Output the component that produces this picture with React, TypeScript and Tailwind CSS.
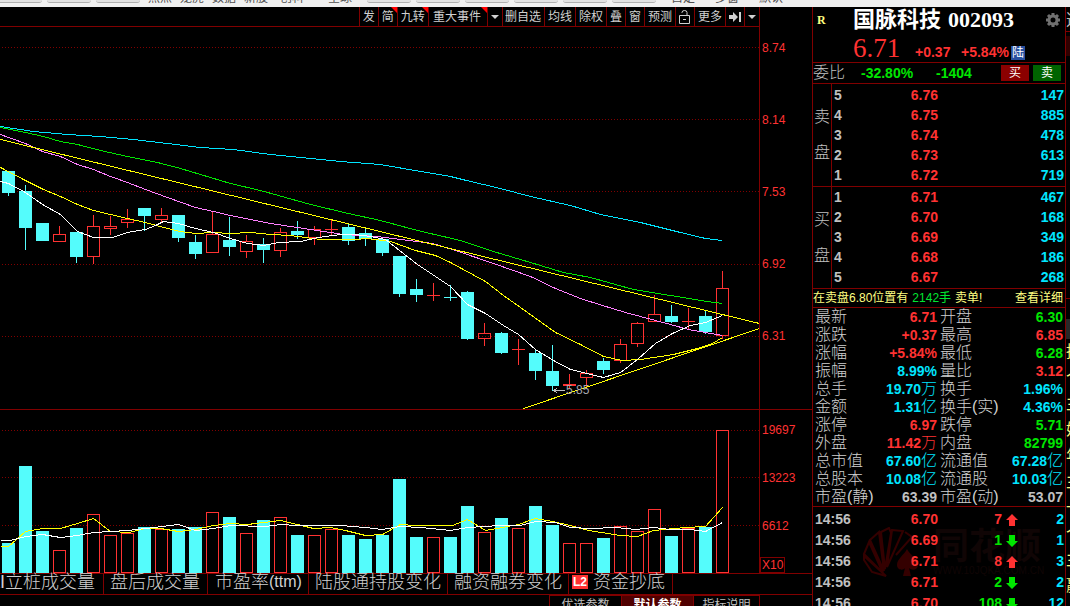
import React from 'react';
import clsx from 'clsx';

const RED = '#ff3232';
const CYAN = '#54fcfc';
const GRID = '#800000';

const STEP = 17;
const BODY = 13;

interface Candle {
  up: boolean;
  top: number;
  bottom: number;
  high: number;
  low: number;
  vol: number;
}

// [up, body top, body bottom, high, low, volume top]
const raw: [number, number, number, number, number, number][] = [
  [0, 171, 193, 171, 196, 543],
  [0, 191, 228, 185, 250, 466],
  [0, 223, 241, 223, 241, 531],
  [1, 234, 242, 226, 242, 550],
  [0, 232, 257, 232, 263, 528],
  [1, 226, 257, 215, 264, 514],
  [1, 226, 229, 216, 235, 535],
  [1, 219, 223, 209, 228, 533],
  [0, 208, 216, 208, 231, 527],
  [1, 215, 220, 208, 223, 529],
  [0, 215, 238, 215, 242, 529],
  [0, 242, 254, 235, 259, 527],
  [1, 234, 253, 212, 253, 512],
  [0, 240, 247, 217, 256, 517],
  [1, 241, 252, 235, 258, 533],
  [0, 244, 250, 238, 263, 520],
  [1, 232, 251, 228, 257, 517],
  [0, 231, 235, 221, 239, 535],
  [1, 229, 238, 226, 245, 535],
  [1, 229, 230, 220, 235, 529],
  [0, 227, 241, 224, 245, 535],
  [0, 233, 239, 229, 246, 539],
  [0, 239, 253, 237, 256, 535],
  [0, 256, 294, 256, 297, 479],
  [0, 289, 295, 279, 302, 537],
  [1, 295, 296, 283, 301, 537],
  [0, 297, 298, 285, 301, 537],
  [0, 292, 339, 291, 340, 506],
  [1, 333, 339, 323, 346, 532],
  [0, 333, 353, 332, 354, 518],
  [1, 349, 350, 339, 365, 528],
  [0, 353, 371, 350, 380, 506],
  [0, 371, 386, 345, 391, 525],
  [1, 384, 386, 374, 388, 543],
  [1, 373, 378, 370, 387, 543],
  [0, 361, 370, 358, 374, 538],
  [1, 344, 361, 339, 363, 526],
  [1, 323, 344, 322, 347, 531],
  [1, 314, 322, 295, 322, 509],
  [0, 316, 322, 305, 323, 536],
  [1, 321, 322, 308, 329, 528],
  [0, 316, 332, 311, 334, 527],
  [1, 288, 336, 271, 339, 430],
];

const candles: Candle[] = raw.map(([up, top, bottom, high, low, vol]) => ({
  up: up === 1,
  top,
  bottom,
  high,
  low,
  vol,
}));

const priceLines = [
  {
    color: '#00e5ff',
    points:
      '0,126 33,131 67,134 100,136 133,139 167,143 200,147 233,149 270,154 340,161 380,164 420,171 450,176 466,180 500,188 530,196 570,205 600,214 640,222 680,232 705,238 722,240',
  },
  {
    color: '#00e600',
    points:
      '0,127 25,132 43,136 60,141 77,144 100,150 127,156 157,162 180,168 200,174 230,183 260,190 310,204 348,213 380,220 417,230 460,240 493,251 530,262 563,272 590,277 633,289 670,295 707,301 722,303',
  },
  {
    color: '#ff80ff',
    points:
      '0,134 8,137 25,143 42,151 60,156 77,164 93,169 110,176 127,182 145,189 167,197 195,207 213,211 230,215 270,223 310,229 343,234 377,236 400,239 432,243 455,250 493,263 530,276 555,288 580,298 602,305 625,312 670,324 688,329 705,332 722,335',
  },
  { color: '#ffff00', points: '0,139 759,323' },
  { color: '#ffff00', points: '523,408 759,328' },
  {
    color: '#ffff00',
    points:
      '0,167 25,180 43,189 60,196 77,204 93,210 127,218 145,222 163,227 180,231 195,233 213,232 230,233 250,232 270,234 290,235 320,239 355,239 367,238 390,241 415,250 435,255 450,262 485,281 503,295 520,307 555,332 580,344 603,356 622,360 640,359 673,354 697,348 712,343 722,337',
  },
  {
    color: '#ffffff',
    points:
      '0,181 8,183 25,192 42,204 60,214 77,231 93,237 112,237 127,232 145,229 155,225 163,221 178,223 195,228 213,232 230,238 247,243 263,245 278,242 300,241 318,237 340,234 355,234 370,236 385,239 417,264 450,286 467,304 485,313 503,325 518,334 535,349 553,360 570,369 603,377 620,372 637,359 655,343 672,333 690,325 705,322 722,315',
  },
];

const volumeLines = [
  {
    color: '#ffff00',
    points:
      '0,546 8,546 25,531 42,528 60,528 77,523 93,518 110,531 128,532 145,528 160,528 178,531 195,529 213,525 230,523 247,524 263,522 280,520 297,524 313,528 330,527 345,530 365,535 382,534 400,524 415,525 452,525 467,519 485,530 502,527 518,524 535,518 552,521 570,525 588,530 620,535 637,536 653,530 685,527 705,526 722,507',
  },
  {
    color: '#ffffff',
    points:
      '0,540 10,540 25,536 42,534 60,537 77,535 93,532 127,530 145,528 178,524 195,530 213,528 230,525 265,526 280,524 297,525 340,525 365,527 382,529 400,526 420,527 450,530 467,527 500,525 520,525 535,521 555,522 570,527 590,528 615,527 635,529 653,527 670,529 690,529 705,531 722,522',
  },
];

const topLinks = [
  { text: '热点', cls: 'ml-2' },
  { text: '龙虎', cls: 'ml-2' },
  { text: '数据', cls: 'ml-2' },
  { text: '新股', cls: 'ml-2' },
  { text: '创科', cls: 'ml-3' },
  { text: '全球', cls: 'ml-6' },
];

const sells = [
  ['5', '6.76', '147'],
  ['4', '6.75', '885'],
  ['3', '6.74', '478'],
  ['2', '6.73', '613'],
  ['1', '6.72', '719'],
];

const buys = [
  ['1', '6.71', '467'],
  ['2', '6.70', '168'],
  ['3', '6.69', '349'],
  ['4', '6.68', '186'],
  ['5', '6.67', '268'],
];

type Tone = 'r' | 'g' | 'c' | 'w';

const toneClass: Record<Tone, string> = {
  r: 'text-[#ff3232]',
  g: 'text-[#00e600]',
  c: 'text-[#00e5ff]',
  w: 'text-[#c0c0c0]',
};

interface Stat {
  label: string;
  value: string;
  unit?: string;
  tone: Tone;
}

const stats: [Stat, Stat][] = [
  [{ label: '最新', value: '6.71', tone: 'r' }, { label: '开盘', value: '6.30', tone: 'g' }],
  [{ label: '涨跌', value: '+0.37', tone: 'r' }, { label: '最高', value: '6.85', tone: 'r' }],
  [{ label: '涨幅', value: '+5.84%', tone: 'r' }, { label: '最低', value: '6.28', tone: 'g' }],
  [{ label: '振幅', value: '8.99%', tone: 'c' }, { label: '量比', value: '3.12', tone: 'r' }],
  [{ label: '总手', value: '19.70', unit: '万', tone: 'c' }, { label: '换手', value: '1.96%', tone: 'c' }],
  [{ label: '金额', value: '1.31', unit: '亿', tone: 'c' }, { label: '换手(实)', value: '4.36%', tone: 'c' }],
  [{ label: '涨停', value: '6.97', tone: 'r' }, { label: '跌停', value: '5.71', tone: 'g' }],
  [{ label: '外盘', value: '11.42', unit: '万', tone: 'r' }, { label: '内盘', value: '82799', tone: 'g' }],
  [
    { label: '总市值', value: '67.60', unit: '亿', tone: 'c' },
    { label: '流通值', value: '67.28', unit: '亿', tone: 'c' },
  ],
  [
    { label: '总股本', value: '10.08', unit: '亿', tone: 'c' },
    { label: '流通股', value: '10.03', unit: '亿', tone: 'c' },
  ],
  [{ label: '市盈(静)', value: '63.39', tone: 'w' }, { label: '市盈(动)', value: '53.07', tone: 'w' }],
];

const ticks = [
  { time: '14:56', price: '6.70', count: '7', up: true, n: '2' },
  { time: '14:56', price: '6.69', count: '1', up: false, n: '1' },
  { time: '14:56', price: '6.71', count: '8', up: true, n: '3' },
  { time: '14:56', price: '6.71', count: '2', up: false, n: '2' },
  { time: '14:56', price: '6.70', count: '108', up: false, n: '12' },
];

const GridLine = ({ y }: { y: number }) => (
  <line x1={2} x2={759} y1={y + 0.5} y2={y + 0.5} stroke={GRID} strokeDasharray="1 2" />
);

const Lines = ({ lines }: { lines: { color: string; points: string }[] }) => (
  <g fill="none" transform="translate(0.5 0.5)">
    {lines.map((l, i) => (
      <polyline key={i} points={l.points} stroke={l.color} />
    ))}
  </g>
);

const PriceChart = () => (
  <svg
    viewBox="0 27 759 382"
    preserveAspectRatio="none"
    shapeRendering="crispEdges"
    className="block h-[382px] w-full"
  >
    {[47, 119, 191, 264, 336].map((y) => (
      <GridLine key={y} y={y} />
    ))}
    {candles.map((c, i) => {
      const x = 2 + i * STEP;
      const color = c.up ? RED : CYAN;
      const flat = c.bottom - c.top < 3;
      return (
        <g key={i} fill={color}>
          <rect x={x + 6} y={c.high} width={1} height={c.top - c.high} />
          <rect x={x + 6} y={c.bottom} width={1} height={c.low - c.bottom} />
          {c.up && !flat ? (
            <rect
              x={x + 0.5}
              y={c.top + 0.5}
              width={BODY - 1}
              height={c.bottom - c.top - 1}
              fill="none"
              stroke={color}
            />
          ) : (
            <rect x={x} y={c.top} width={BODY} height={c.bottom - c.top} />
          )}
        </g>
      );
    })}
    <Lines lines={priceLines} />
    <path d="M553 390.5h12M553 390.5l4-2M553 390.5l4 2" stroke="#c0c0c0" fill="none" />
    <text x={566} y={394} fill="#a8a8b0" fontSize={12} fontFamily="Liberation Sans">
      5.85
    </text>
  </svg>
);

const VolumeChart = () => (
  <svg
    viewBox="0 410 759 163"
    preserveAspectRatio="none"
    shapeRendering="crispEdges"
    className="block h-[163px] w-full"
  >
    {[430, 477, 525].map((y) => (
      <GridLine key={y} y={y} />
    ))}
    {candles.map((c, i) => {
      const x = 2 + i * STEP;
      return c.up ? (
        <rect key={i} x={x + 0.5} y={c.vol + 0.5} width={BODY - 1} height={572 - c.vol} fill="#000" stroke={RED} />
      ) : (
        <rect key={i} x={x} y={c.vol} width={BODY} height={573 - c.vol} fill={CYAN} />
      );
    })}
    <Lines lines={volumeLines} />
  </svg>
);

interface ToolProps {
  children: React.ReactNode;
  flag?: boolean;
  className?: string;
  label?: string;
}

const Tool = ({ children, flag, className = 'px-[3px]', label }: ToolProps) => (
  <button
    aria-label={label}
    className={clsx(
      'relative flex h-full shrink-0 items-center border-l border-[#800000] pt-px text-xs whitespace-nowrap text-[#d0d0d0]',
      className,
    )}
  >
    {children}
    {flag && (
      <svg viewBox="0 0 6 6" className="absolute top-0 right-0 size-1.5">
        <path d="M0 0h6v6z" fill="#ff0000" />
      </svg>
    )}
  </button>
);

const Caret = () => (
  <svg viewBox="0 0 8 4" className="h-1 w-2">
    <path d="M0 0h8L4 4z" fill="#d0d0d0" />
  </svg>
);

const Toolbar = () => (
  <div className="flex h-5 justify-end border-b border-[#800000]">
    <Tool>发</Tool>
    <Tool flag>简</Tool>
    <Tool flag>九转</Tool>
    <Tool flag className="pr-[6px] pl-[4px]">
      重大事件
    </Tool>
    <Tool label="展开" className="px-[3px]">
      <Caret />
    </Tool>
    <Tool className="pr-[3px] pl-[2px]">删自选</Tool>
    <Tool>均线</Tool>
    <Tool>除权</Tool>
    <Tool>叠</Tool>
    <Tool>窗</Tool>
    <Tool>预测</Tool>
    <Tool label="锁定">
      <svg viewBox="0 0 12 14" fill="none" stroke="#d0d0d0" className="h-3.5 w-3">
        <path d="M.5 5.500h10v8H.5zM4 9.500h3M3 3V2.500q0-2 2.500-2t2.500 2v3" />
      </svg>
    </Tool>
    <Tool>更多</Tool>
    <Tool label="隐藏">
      <svg viewBox="0 0 12 12" fill="#d0d0d0" className="size-3">
        <path d="M0 4h4V1l5 5-5 5V8H0zM10 1h2v10h-2z" />
      </svg>
    </Tool>
    <Tool label="更多选项">
      <Caret />
    </Tool>
  </div>
);

const TopButton = () => (
  <button aria-label="工具" className="h-[3px] w-11 shrink-0 rounded-b-sm border-b border-[#b0b0b0] bg-[#e2e2e2]" />
);

const TopStrip = () => (
  <header className="flex h-[7px] items-start overflow-hidden bg-[#f0f0f0] text-xs whitespace-nowrap text-[#505050]">
    <div className="-ml-0.5 flex gap-[5px]">
      <TopButton />
      <TopButton />
      <TopButton />
    </div>
    <nav className="-mt-2 flex leading-none">
      {topLinks.map((l) => (
        <a key={l.text} href="#" className={clsx('w-6 shrink-0', l.cls)}>
          {l.text}
        </a>
      ))}
    </nav>
    <div className="ml-[15px] flex gap-[5px]">
      {Array.from({ length: 6 }, (_, i) => (
        <TopButton key={i} />
      ))}
    </div>
    <nav className="-mt-2 ml-[15px] flex gap-5 leading-none">
      <a href="#">自定</a>
      <a href="#">多窗</a>
      <a href="#">默认</a>
    </nav>
  </header>
);

const IndicatorTab = ({ children, className = 'px-[7px]' }: { children: React.ReactNode; className?: string }) => (
  <button
    className={clsx(
      'flex h-5 shrink-0 items-center border-r border-[#800000] pb-1 text-lg leading-none font-light whitespace-nowrap text-[#d0d0d0]',
      className,
    )}
  >
    {children}
  </button>
);

const ParamTab = ({
  children,
  active,
  className = 'w-[72px]',
}: {
  children: React.ReactNode;
  active?: boolean;
  className?: string;
}) => (
  <button
    className={clsx(
      'shrink-0 border-t border-l border-[#800000] pt-px text-xs whitespace-nowrap',
      className,
      active ? 'bg-[#500000] font-bold text-white' : 'text-[#c0c0c0]',
    )}
  >
    {children}
  </button>
);

const Axis = ({ values, className, children }: { values: string[]; className: string; children?: React.ReactNode }) => (
  <div
    className={clsx(
      'flex w-[53px] shrink-0 flex-col items-start border-l border-[#800000] text-xs leading-5 text-[#ff3232]',
      className,
    )}
  >
    {values.map((v) => (
      <span key={v} className="pl-0.5">
        {v}
      </span>
    ))}
    {children}
  </div>
);

const Book = ({ title, rows, className }: { title: string; rows: string[][]; className?: string }) => (
  <section className="flex border-b border-[#800000]">
    <div className="flex w-[19px] shrink-0 flex-col items-center justify-center gap-5 border-r border-[#800000] text-base leading-4 font-light text-[#c0c0c0]">
      {title.split('').map((ch) => (
        <span key={ch}>{ch}</span>
      ))}
    </div>
    <div className={clsx('flex-1 pr-px', className)}>
      <table className="w-full table-fixed text-sm leading-5 font-bold">
        <tbody>
          {rows.map(([level, price, vol]) => (
            <tr key={level}>
              <td className="w-10 p-0 pl-0.5 text-[#c0c0c0]">{level}</td>
              <td className="w-[66px] p-0 text-right text-[#ff3232]">{price}</td>
              <td className="p-0 text-right text-[#00e5ff]">{vol}</td>
            </tr>
          ))}
        </tbody>
      </table>
    </div>
  </section>
);

const StatCells = ({ stat, last }: { stat: Stat; last?: boolean }) => (
  <>
    <th className="p-0 pl-0.5 text-left text-base leading-[18px] font-light whitespace-nowrap text-[#d0d0d0]">
      {stat.label}
    </th>
    <td className={clsx('p-0 text-right whitespace-nowrap', last ? 'pr-0.5' : 'pr-px', toneClass[stat.tone])}>
      {stat.value}
      {stat.unit && <span className="text-base leading-4 font-light">{stat.unit}</span>}
    </td>
  </>
);

const Watermark = () => (
  <div className="absolute top-5 left-12 flex items-center" aria-hidden="true">
    <svg viewBox="0 0 60 52" className="h-[52px] w-[60px]" fill="none" stroke="#340000" strokeWidth={2}>
      <path d="M3 33l8 12 14 4L3 29zM3 27l5-12 14 31zM9 13l9-8 5 39zM20 5l8-4 2 5-6 36zM31 3l11 1-16 36zM44 5l7 5-16 18" />
      <path
        d="M46 22c-3 6-10 10-10 16 0 5 6 6 8 3l-2 8h8l-2-8c3 3 9 2 9-3 0-6-8-10-11-16z"
        fill="#340000"
        stroke="none"
      />
    </svg>
    <div className="ml-3 text-[#100505]">
      <div className="text-4xl leading-9 font-bold">同花顺</div>
      <div className="text-[10px] leading-3">WWW.10JQKA.COM.CN</div>
    </div>
  </div>
);

const QuotePanel = () => (
  <aside className="w-[254px] shrink-0 overflow-hidden border-x border-[#800000]">
    <div className="border-b border-[#800000]">
      <div className="flex h-[26px] items-center pl-1">
        <span className="w-9 font-['Liberation_Serif','Noto_Sans_CJK_SC',serif] text-xs font-bold text-[#ffff80]">
          R
        </span>
        <h1 className="flex items-baseline gap-[7px] font-['Liberation_Serif','Noto_Sans_CJK_SC',serif] text-[22px] leading-[26px] font-bold whitespace-nowrap text-white">
          <span>国脉科技</span>
          <span>002093</span>
        </h1>
        <button aria-label="设置" className="mr-1 ml-auto">
          <svg viewBox="0 0 16 16" className="size-4">
            <circle cx={8} cy={8} r={4} fill="none" stroke="#707070" strokeWidth={3} />
            <path
              d="M8 1v3M8 12v3M1 8h3M12 8h3M3 3l2 2M11 11l2 2M13 3l-2 2M5 11l-2 2"
              stroke="#707070"
              strokeWidth={3}
            />
          </svg>
        </button>
      </div>
      <div className="flex h-[29px] items-baseline pt-px pl-10 text-sm font-bold whitespace-nowrap text-[#ff3232]">
        <span className="w-[62px] font-['Liberation_Serif',serif] text-[27px] leading-[29px] font-normal">6.71</span>
        <span className="w-[46px]">+0.37</span>
        <span className="w-[50px]">+5.84%</span>
        <span className="bg-[#2850a0] px-px text-xs leading-[14px] font-normal text-white">陆</span>
      </div>
    </div>

    <div className="flex h-[21px] items-center border-b border-[#800000] text-sm font-bold text-[#00e600]">
      <span className="w-12 text-base leading-5 font-light text-[#c0c0c0]">委比</span>
      <span className="w-[75px]">-32.80%</span>
      <span>-1404</span>
      <button className="mr-1 ml-auto h-4 w-7 bg-[#8b0000] text-xs leading-4 font-normal text-white">买</button>
      <button className="mr-1 h-4 w-7 bg-[#006400] text-xs leading-4 font-normal text-white">卖</button>
    </div>

    <Book title="卖盘" rows={sells} className="py-px" />
    <Book title="买盘" rows={buys} className="pb-px" />

    <div className="flex h-[19px] items-center border-b border-[#800000] text-xs whitespace-nowrap text-[#ffff80]">
      <span>在卖盘6.80位置有</span>
      <span className="ml-1 text-[#00e632]">2142手</span>
      <span className="ml-1">卖单!</span>
      <a href="#" className="mr-0.5 ml-auto">
        查看详细
      </a>
    </div>

    <div className="border-b border-[#800000]">
      <table className="w-full table-fixed text-sm leading-[18px] font-bold">
        <colgroup>
          <col className="w-[60px]" />
          <col className="w-[65px]" />
          <col className="w-[60px]" />
          <col />
        </colgroup>
        <tbody>
          {stats.map(([a, b]) => (
            <tr key={a.label} className="h-[18px]">
              <StatCells stat={a} />
              <StatCells stat={b} last />
            </tr>
          ))}
        </tbody>
      </table>
    </div>

    <div className="relative pt-0.5 pr-px">
      <Watermark />
      <table className="relative w-full table-fixed text-sm leading-[21px] font-bold">
        <colgroup>
          <col className="w-[60px]" />
          <col className="w-[65px]" />
          <col className="w-[64px]" />
          <col className="w-5" />
          <col />
        </colgroup>
        <tbody>
          {ticks.map((t, i) => (
            <tr key={i} className="h-[21px]">
              <td className="p-0 pl-0.5 text-[#c0c0c0]">{t.time}</td>
              <td className="p-0 text-right text-[#ff3232]">{t.price}</td>
              <td className={clsx('p-0 text-right', t.up ? 'text-[#ff3232]' : 'text-[#00e600]')}>{t.count}</td>
              <td className="p-0 pl-1">
                <svg viewBox="0 0 12 12" className="size-3" fill={t.up ? RED : '#00e600'}>
                  <path d={t.up ? 'M6 0l6 6H9v6H3V6H0z' : 'M6 12l6-6H9V0H3v6H0z'} />
                </svg>
              </td>
              <td className="p-0 text-right text-[#00e5ff]">{t.n}</td>
            </tr>
          ))}
        </tbody>
      </table>
    </div>
  </aside>
);

// left edge of the news panel that runs off the window
const NewsEdge = () => (
  <div className="w-1 shrink-0 overflow-hidden text-base leading-[26px] whitespace-nowrap text-[#ffff80]">
    <div className="h-[25px] border-b border-[#800000] text-[#c0c0c0]">选</div>
    <div className="mt-1 h-5 bg-[#300000]" />
    <div className="mt-[242px] border-t border-[#800000]" />
    <div className="mt-5 h-5 bg-[#282828]" />
    {['据', '个', '主', '始', '年', '主', '一', '个', '主', '赢'].map((ch, i) => (
      <div key={i}>{ch}</div>
    ))}
  </div>
);

export default function App() {
  return (
    <div className="flex h-screen flex-col overflow-hidden bg-black font-['Liberation_Sans','Noto_Sans_CJK_SC',sans-serif]">
      <TopStrip />
      <div className="flex min-h-0 flex-1">
        <main className="flex min-w-0 flex-1 flex-col overflow-hidden">
          <div className="flex border-b border-[#800000]">
            <div className="min-w-0 flex-1">
              <Toolbar />
              <PriceChart />
            </div>
            <Axis values={['8.74', '8.14', '7.53', '6.92', '6.31']} className="gap-[52px] pt-[31px]" />
          </div>
          <div className="flex border-b border-[#800000]">
            <div className="min-w-0 flex-1">
              <VolumeChart />
            </div>
            <Axis values={['19697', '13223', '6612']} className="gap-7 pt-[10px]">
              <span className="-mt-[7px] border border-[#800000] px-px leading-[14px]">X10</span>
            </Axis>
          </div>

          <div className="flex border-b border-[#800000]">
            <IndicatorTab className="-ml-3 pr-2">AI立桩成交量</IndicatorTab>
            <IndicatorTab className="pr-[7px] pl-[6px]">盘后成交量</IndicatorTab>
            <IndicatorTab className="pr-[6px] pl-[7px]">
              市盈率<span className="text-base leading-none">(ttm)</span>
            </IndicatorTab>
            <IndicatorTab className="px-[6px]">陆股通持股变化</IndicatorTab>
            <IndicatorTab className="px-[6px]">融资融券变化</IndicatorTab>
            <IndicatorTab className="pr-[7px] pl-[3px]">
              <span className="mr-[5px] bg-[#ff3232] px-px text-xs leading-[14px] font-bold text-white">L2</span>
              资金抄底
            </IndicatorTab>
          </div>
          <div className="flex justify-end">
            <ParamTab>优选参数</ParamTab>
            <ParamTab active>默认参数</ParamTab>
            <ParamTab className="w-[66px]">指标说明</ParamTab>
            <div className="w-[53px] shrink-0 border-l border-[#800000]" />
          </div>
        </main>
        <QuotePanel />
        <NewsEdge />
      </div>
    </div>
  );
}
